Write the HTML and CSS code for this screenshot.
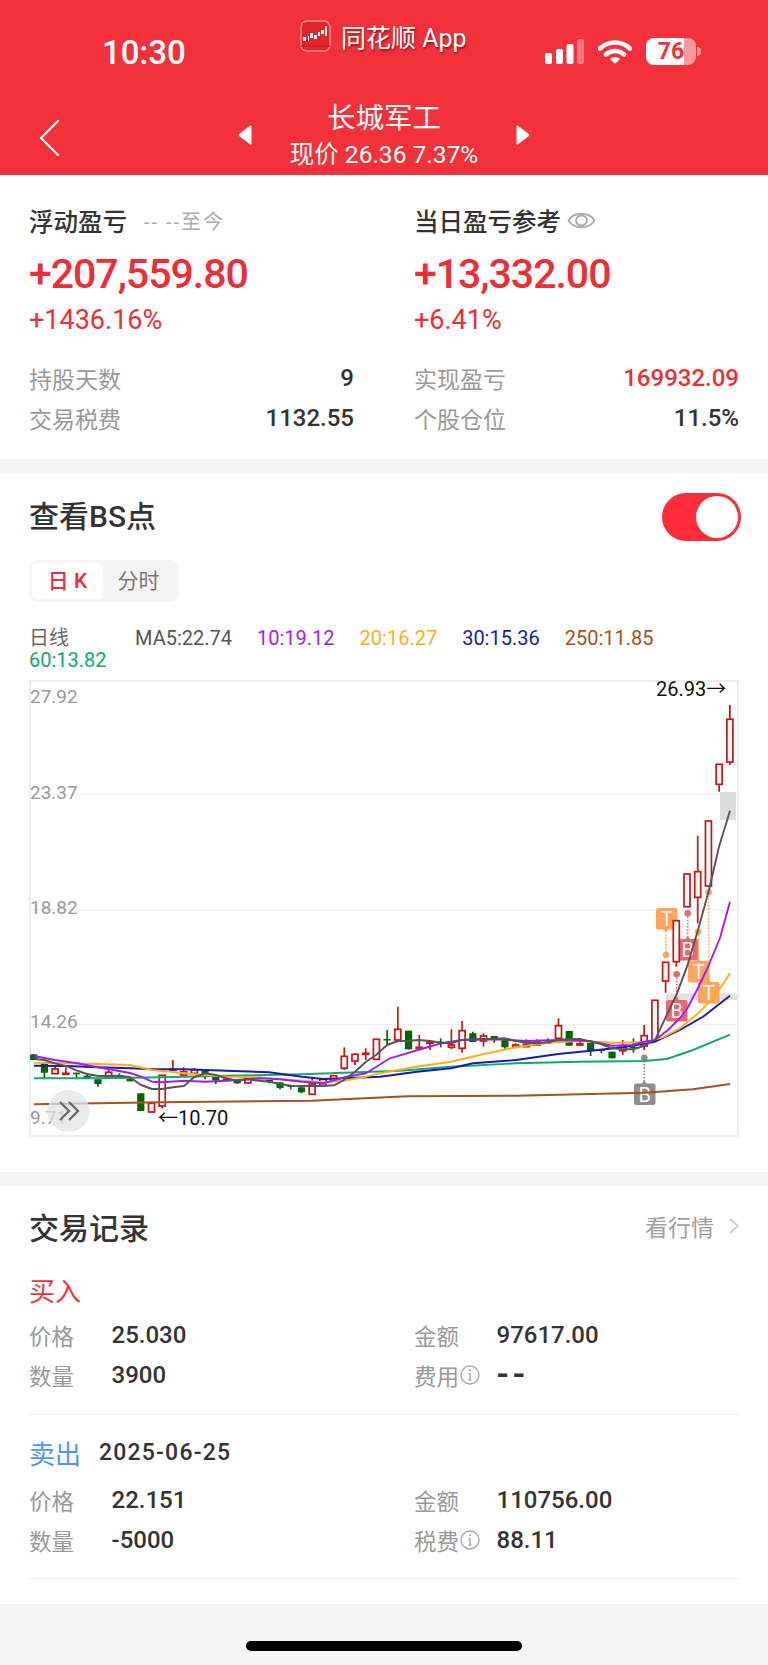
FILE: index.html
```html
<!DOCTYPE html>
<html lang="zh-CN">
<head>
  <meta charset="UTF-8" />
  <meta name="viewport" content="width=device-width, initial-scale=1.0"/>
  <title>长城军工</title>
  <link rel="stylesheet" href="styles.css">
</head>
<body>

  <header class="header">
    <div class="status">
      <div class="time">10:30</div>
      <div class="app">
        <svg class="app-logo" viewBox="0 0 31 32">
          <rect x="1" y="1" width="29" height="30" rx="6" fill="#e0252b" stroke="#f98a8f" stroke-width="1.5"/>
          <path d="M1 26h29" stroke="#c81f25" stroke-width="1.5"/>
          <path d="M3 17h3v4H3zM8 16h1v5H8zM10 13h3v5h-3zM14 15h3v4h-3zM18 12h2v4h-2zM21 10h3v4h-3zM25 6h2v10h-2z" fill="#fff"/>
        </svg>
        <span class="app-name">同花顺 App</span>
      </div>
      <svg class="signal" viewBox="0 0 39 25">
        <rect x="0" y="14" width="7" height="11" rx="2" fill="#fff"/>
        <rect x="11" y="10" width="7" height="15" rx="2" fill="#fff"/>
        <rect x="21.500" y="5" width="7" height="20" rx="2" fill="#fff"/>
        <rect x="32" y="0" width="7" height="25" rx="2" fill="#fff" opacity=".35"/>
      </svg>
      <svg class="wifi" viewBox="0 0 34 25">
        <path d="M2 9.500a22 22 0 0 1 30 0M8 15.500a13.500 13.500 0 0 1 18 0" fill="none" stroke="#fff" stroke-width="4.500" stroke-linecap="round"/>
        <path d="M12 20a7.500 7.500 0 0 1 10 0l-5 5z" fill="#fff"/>
      </svg>
      <div class="battery">76</div>
      <div class="battery-nub"></div>
    </div>
    <div class="nav">
      <svg class="back" viewBox="0 0 20 36">
        <path d="M19 1L2 18l17 17" fill="none" stroke="#fff" stroke-width="2.200" stroke-linecap="round" stroke-linejoin="round"/>
      </svg>
      <div class="stock">
        <svg class="arrow" viewBox="0 0 14 20"><path d="M12.500 1.500v17L1.500 10z" fill="#fff" stroke="#fff" stroke-width="2" stroke-linejoin="round"/></svg>
        <div class="stock-text">
          <div class="stock-name">长城军工</div>
          <div class="stock-price">现价 26.36 7.37%</div>
        </div>
        <svg class="arrow" viewBox="0 0 14 20"><path d="M1.500 1.500v17L12.500 10z" fill="#fff" stroke="#fff" stroke-width="2" stroke-linejoin="round"/></svg>
      </div>
    </div>
  </header>

  <section class="panel summary">
    <div class="summary-col">
      <div class="summary-title">浮动盈亏 <span class="since">-- --至今</span></div>
      <div class="big-value">+207,559.80</div>
      <div class="big-pct">+1436.16%</div>
      <div class="stat"><span>持股天数</span><b>9</b></div>
      <div class="stat"><span>交易税费</span><b>1132.55</b></div>
    </div>
    <div class="summary-col">
      <div class="summary-title">当日盈亏参考
        <svg class="eye" viewBox="0 0 29 19">
          <path d="M1.500 9.500C7 .5 22 .5 27.500 9.500 22 18.500 7 18.500 1.500 9.500z" fill="none" stroke="#aaa" stroke-width="1.800"/>
          <ellipse cx="14.500" cy="9.500" rx="5.500" ry="5" fill="none" stroke="#aaa" stroke-width="1.800"/>
        </svg>
      </div>
      <div class="big-value">+13,332.00</div>
      <div class="big-pct">+6.41%</div>
      <div class="stat"><span>实现盈亏</span><b class="red">169932.09</b></div>
      <div class="stat"><span>个股仓位</span><b>11.5%</b></div>
    </div>
  </section>

  <section class="panel bs">
    <div class="bs-head">
      <div class="section-title">查看BS点</div>
      <div class="toggle"><div class="knob"></div></div>
    </div>
    <div class="tabs">
      <div class="tab active">日 K</div>
      <div class="tab">分时</div>
    </div>
    <div class="legend">
      <span class="legend-name">日线</span>
      <span class="ma5">MA5:22.74</span>
      <span class="ma10">10:19.12</span>
      <span class="ma20">20:16.27</span>
      <span class="ma30">30:15.36</span>
      <span class="ma250">250:11.85</span>
      <span class="ma60">60:13.82</span>
    </div>

    <svg id="kline" class="kline" viewBox="29 680 711 458">
      <rect x="30" y="681" width="708" height="455" fill="#fff" stroke="#eee" stroke-width="2"/>
      <path d="M30 794.500h708M30 910h708M30 1024.500h708" stroke="#f1f1f1" stroke-width="1.500"/>
      <g class="axis">
        <text x="30" y="703">27.92</text>
        <text x="30" y="799">23.37</text>
        <text x="30" y="914">18.82</text>
        <text x="30" y="1028">14.26</text>
        <text x="30" y="1124">9.71</text>
      </g>
      <rect x="720" y="792" width="16" height="28" fill="#ddd"/>
      <rect x="666" y="993.500" width="71" height="6.500" fill="#e2e2e2"/>
      <path d="M730 765h7" stroke="#ddd" stroke-width="1"/>
      <g id="plot"></g>
      <text class="extreme" x="656" y="696">26.93→</text>
      <text class="extreme" x="158" y="1125">←10.70</text>
      <circle cx="68.500" cy="1111" r="21" fill="#e4e4e4" fill-opacity=".75"/>
      <path d="M60 1102l9 9-9 9M69 1102l9 9-9 9" fill="none" stroke="#666" stroke-width="2.200"/>
    </svg>
  </section>

  <section class="panel trades">
    <div class="trades-head">
      <div class="section-title">交易记录</div>
      <div class="more">看行情
        <svg class="more-arrow" viewBox="0 0 10 16"><path d="M1 1l8 7-8 7" fill="none" stroke="#ccc" stroke-width="1.800"/></svg>
      </div>
    </div>

    <div class="trade">
      <div class="trade-side"><span class="buy">买入</span></div>
      <div class="trade-grid">
        <div class="cell"><span class="label">价格</span><b>25.030</b></div>
        <div class="cell"><span class="label">金额</span><b>97617.00</b></div>
        <div class="cell"><span class="label">数量</span><b>3900</b></div>
        <div class="cell"><span class="label">费用<svg class="info" viewBox="0 0 20 20"><circle cx="10" cy="10" r="9" fill="none" stroke="#aaa" stroke-width="1.400"/><path d="M10 8.500v6.500M8.500 15h3M8.500 8.500H10" fill="none" stroke="#aaa" stroke-width="1.500"/><circle cx="10" cy="5.300" r="1.100" fill="#aaa"/></svg></span><b class="dash">--</b></div>
      </div>
    </div>

    <div class="trade">
      <div class="trade-side"><span class="sell">卖出</span><span class="trade-date">2025-06-25</span></div>
      <div class="trade-grid">
        <div class="cell"><span class="label">价格</span><b>22.151</b></div>
        <div class="cell"><span class="label">金额</span><b>110756.00</b></div>
        <div class="cell"><span class="label">数量</span><b>-5000</b></div>
        <div class="cell"><span class="label">税费<svg class="info" viewBox="0 0 20 20"><circle cx="10" cy="10" r="9" fill="none" stroke="#aaa" stroke-width="1.400"/><path d="M10 8.500v6.500M8.500 15h3M8.500 8.500H10" fill="none" stroke="#aaa" stroke-width="1.500"/><circle cx="10" cy="5.300" r="1.100" fill="#aaa"/></svg></span><b>88.11</b></div>
      </div>
    </div>
  </section>

  <footer class="footer"><div class="home-bar"></div></footer>

  <script src="chart.js"></script>
</body>
</html>
```

FILE: styles.css
```css
* {
  box-sizing: border-box;
}
body {
  margin: 0;
  background-color: #f5f5f5;
  color: #333;
  font-family: Roboto, "Noto Sans CJK SC", sans-serif;
}
b {
  font-weight: 500;
}

/* red top bar */
.header {
  height: 175px;
  background-color: #f3313b;
  color: #fff;
}
.status {
  display: flex;
  align-items: center;
  height: 100px;
  padding-left: 102px;
}
.time {
  width: 198px;
  padding-top: 4px;
  font-size: 33px;
  font-weight: 500;
}
.app {
  display: flex;
  align-items: center;
  gap: 10px;
  width: 245px;
  margin-top: -28px;
}
.app-logo {
  width: 31px;
  height: 32px;
}
.app-name {
  font-size: 25px;
  text-shadow: 1px 2px 2px rgba(90, 0, 0, .55);
}
.signal {
  width: 39px;
  height: 25px;
  margin-top: 3px;
}
.wifi {
  width: 34px;
  height: 25px;
  margin: 3px 14px 0;
}
.battery {
  width: 50px;
  height: 27px;
  margin-top: 3px;
  border-radius: 8px;
  background: linear-gradient(90deg, #fff 76%, rgba(255, 255, 255, .5) 76%);
  color: #f3313b;
  font-size: 23px;
  font-weight: 700;
  line-height: 27px;
  text-align: center;
}
.battery-nub {
  width: 4px;
  height: 9px;
  margin: 3px 0 0 1px;
  border-radius: 0 4px 4px 0;
  background-color: rgba(255, 255, 255, .5);
}
.nav {
  display: grid;
  grid-template-columns: 238px 292px;
  align-items: center;
  height: 75px;
}
.back {
  width: 20px;
  height: 36px;
  margin: 0 0 0 39px;
}
.stock {
  display: flex;
  justify-content: space-between;
  align-items: center;
  margin-top: -3px;
}
.arrow {
  width: 14px;
  height: 20px;
  margin-top: -2px;
}
.stock-text {
  text-align: center;
}
.stock-name {
  font-size: 28.500px;
  line-height: 36px;
}
.stock-price {
  margin-top: 2px;
  font-size: 24.500px;
  line-height: 32px;
}

/* white blocks */
.panel {
  padding: 0 29px;
  background-color: #fff;
}
.red {
  color: #ee2d36;
}

.summary {
  display: grid;
  grid-template-columns: 325px 325px;
  column-gap: 60px;
  height: 284px;
  margin-bottom: 14px;
  padding-top: 28px;
}
.summary-title {
  display: flex;
  align-items: center;
  height: 34px;
  font-size: 24.500px;
  font-weight: 500;
}
.since {
  margin-left: 17px;
  color: #aaa;
  font-size: 20px;
  font-weight: 400;
  letter-spacing: 2px;
}
.eye {
  width: 29px;
  height: 19px;
  margin-left: 6px;
}
.big-value {
  margin-top: 14px;
  color: #ee2d36;
  font-size: 41px;
  font-weight: 500;
  letter-spacing: -1px;
  line-height: 46px;
}
.big-pct {
  margin-top: 5px;
  color: #ee2d36;
  font-size: 27px;
  line-height: 36px;
}
.stat {
  display: flex;
  justify-content: space-between;
  align-items: center;
  height: 40px;
  font-size: 24px;
}
.big-pct + .stat {
  margin-top: 20px;
}
.stat span {
  color: #999;
  font-size: 23px;
}

.bs {
  height: 699px;
  margin-bottom: 14px;
  padding-top: 20px;
}
.bs-head,
.trades-head {
  display: flex;
  justify-content: space-between;
  align-items: center;
}
.section-title {
  font-size: 30px;
  font-weight: 500;
}
.bs .section-title {
  margin-top: -6px;
}
.toggle {
  display: flex;
  justify-content: flex-end;
  align-items: center;
  width: 79px;
  height: 48px;
  margin-right: -2px;
  padding-right: 3px;
  border-radius: 24px;
  background-color: #ff2d3b;
}
.knob {
  width: 42px;
  height: 42px;
  border-radius: 50%;
  background-color: #fff;
}
.tabs {
  display: inline-flex;
  width: 150px;
  height: 42px;
  margin-top: 19px;
  padding: 3px;
  border-radius: 8px;
  background-color: #f5f5f5;
}
.tab {
  width: 71px;
  border-radius: 6px;
  color: #777;
  font-size: 21px;
  line-height: 36px;
  text-align: center;
}
.tab.active {
  background-color: #fff;
  color: #ee2d36;
  font-weight: 500;
}
.legend {
  display: flex;
  flex-wrap: wrap;
  column-gap: 25px;
  margin-top: 25px;
  font-size: 20px;
  line-height: 22px;
}
.legend-name {
  width: 81px;
  color: #666;
}
.ma5 { color: #555; }
.ma10 { color: #a01cff; }
.ma20 { color: #ffae1a; }
.ma30 { color: #1a1aa8; }
.ma250 { color: #a84f1f; }
.ma60 { color: #12a870; }

.kline {
  display: block;
  width: 711px;
  height: 458px;
  margin: 9px 0 0;
}
.axis text {
  fill: #999;
  font-size: 19px;
}
.extreme {
  fill: #111;
  font-size: 20px;
}
.tag-text {
  fill: #fff;
  font-size: 20px;
  text-anchor: middle;
}

.trades {
  height: 418px;
  padding-top: 18px;
}
.more {
  display: flex;
  align-items: center;
  gap: 15px;
  color: #a0a0a0;
  font-size: 23px;
}
.more-arrow {
  width: 10px;
  height: 16px;
}
.trade {
  border-bottom: 1px solid #f1f1f1;
}
.trade-side {
  display: flex;
  align-items: center;
  gap: 18px;
  height: 34px;
  margin-top: 24px;
  font-size: 26px;
}
.trade + .trade .trade-side {
  margin-top: 20px;
}
.buy {
  color: #f3313b;
}
.sell {
  color: #4a98f5;
}
.trade-date {
  font-size: 23px;
  font-weight: 500;
  letter-spacing: 1.200px;
}
.trade-grid {
  display: grid;
  grid-template-columns: 385px 1fr;
  padding: 9px 0 19px;
}
.trade + .trade .trade-grid {
  padding: 11px 0 18px;
}
.cell {
  display: flex;
  align-items: center;
  height: 40px;
  font-size: 24px;
}
.label {
  display: flex;
  align-items: center;
  width: 82.500px;
  color: #999;
  font-size: 22.500px;
}
.dash {
  font-size: 36px;
  letter-spacing: 4px;
}
.info {
  width: 20px;
  height: 20px;
  margin-left: 1px;
}

.footer {
  display: flex;
  justify-content: center;
  padding-top: 37px;
}
.home-bar {
  width: 276px;
  height: 10px;
  border-radius: 5px;
  background-color: #000;
}
```

FILE: chart.js
```js
const plot = document.getElementById('plot');
const SVG_NS = 'http://www.w3.org/2000/svg';

function add(tag, attrs, text) {
  const el = document.createElementNS(SVG_NS, tag);
  for (const key in attrs) el.setAttribute(key, attrs[key]);
  if (text) el.textContent = text;
  plot.appendChild(el);
  return el;
}

// trade markers: letter, box left, box top, dot x, dot y, colour
const marks = [
  ['T', 656, 908, 666, 955, '#ffa45c'],
  ['B', 677, 939, 687.7, 913.3, '#ef6670'],
  ['T', 688, 961, 698.3, 931.7, '#ffa45c'],
  ['T', 698, 982, 708.7, 892.3, '#ffa45c'],
  ['B', 666, 1000, 676.7, 974.3, '#ef6670'],
  ['B', 634, 1083.500, 644.3, 1057.7, '#8e8e8e']
];

marks.forEach(([letter, x, y, dotX, dotY, color]) => {
  const midY = y + 10.5;
  add('line', { x1: dotX, y1: dotY, x2: dotX, y2: midY, stroke: color, 'stroke-width': 1.6, 'stroke-dasharray': '1.6 1.6' });
  add('circle', { cx: dotX, cy: dotY, r: 3.3, fill: color });
  add('rect', { x: x, y: y, width: 21.5, height: 21.5, rx: 2, fill: color });
  const tipY = dotY < y ? y - 3 : y + 24.5;
  const baseY = dotY < y ? y + 1 : y + 20.5;
  add('path', { d: `M${dotX - 3} ${baseY}L${dotX} ${tipY}L${dotX + 3} ${baseY}z`, fill: color });
  add('text', { x: x + 10.75, y: y + 18, class: 'tag-text' }, letter);
});

// candles in order: high, body top, body bottom, low, r = hollow red, g = solid green
const candles = [
  [1054, 1054.3, 1060, 1060, 'g'], [1062, 1062.3, 1072.7, 1078, 'g'], [1067, 1069, 1073.7, 1074, 'r'],
  [1067.3, 1073.3, 1074.3, 1074.3, 'r'], [1072.7, 1072.7, 1073.7, 1078, 'g'], [1073, 1075.7, 1078.3, 1078.3, 'g'],
  [1079, 1079.3, 1084, 1086.7, 'g'], [1069, 1072.3, 1077.7, 1078, 'r'], [1073.3, 1075, 1078, 1078, 'g'],
  [1076.7, 1079, 1081.3, 1081.3, 'g'], [1093.3, 1093.3, 1111, 1111, 'g'], [1101.7, 1103.3, 1112, 1112, 'r'],
  [1075.3, 1075.3, 1106, 1108.3, 'r'], [1060, 1069.3, 1070.3, 1070.3, 'r'], [1067.3, 1071.7, 1075, 1075, 'r'],
  [1068.3, 1069.7, 1073.3, 1073.3, 'r'], [1071, 1071, 1075, 1079.3, 'g'], [1076.3, 1076.3, 1080.3, 1084, 'g'],
  [1075, 1079.3, 1080.3, 1080.3, 'r'], [1080.3, 1080.3, 1083.3, 1084, 'g'], [1078.3, 1078.3, 1083, 1083, 'r'],
  [1077.5, 1077.7, 1078.5, 1078.5, 'g'], [1080, 1080, 1081, 1083.3, 'g'], [1082.3, 1082.3, 1088, 1089.3, 'g'],
  [1085.3, 1085.3, 1086.7, 1089.3, 'g'], [1087.3, 1087.3, 1092.3, 1093.3, 'g'], [1077.3, 1084, 1094.3, 1094.3, 'r'],
  [1079.3, 1079.3, 1085.3, 1085.3, 'r'], [1075.7, 1075.7, 1080.7, 1080.7, 'r'], [1047.3, 1056.3, 1068.3, 1070, 'r'],
  [1053.3, 1054.3, 1061, 1065, 'r'], [1048.3, 1053.3, 1054.3, 1060, 'r'], [1039.3, 1039.3, 1059.3, 1059.3, 'r'],
  [1030, 1039, 1040, 1045, 'g'], [1006.7, 1029.3, 1040, 1040, 'r'], [1030.7, 1030.7, 1049.3, 1049.3, 'g'],
  [1035, 1047.3, 1048.3, 1048.3, 'r'], [1041.7, 1042.3, 1043.3, 1050, 'r'], [1038.3, 1041.7, 1042.7, 1047.3, 'g'],
  [1029.3, 1045, 1047.3, 1049.3, 'r'], [1021, 1030.7, 1048.3, 1052.7, 'r'], [1031.7, 1033.3, 1042, 1042, 'g'],
  [1033.3, 1036, 1041, 1046.7, 'r'], [1036, 1036, 1040, 1042.7, 'g'], [1038, 1040, 1047.3, 1048.7, 'g'],
  [1043.3, 1045, 1047.3, 1047.3, 'r'], [1039.3, 1044.3, 1046.7, 1046.7, 'r'], [1039.3, 1042, 1045, 1045, 'r'],
  [1038.3, 1041.7, 1044, 1044, 'g'], [1018.3, 1025.7, 1038.3, 1043.3, 'r'], [1031, 1031, 1045.7, 1045.7, 'g'],
  [1038.3, 1044, 1045, 1045, 'r'], [1042.7, 1042.7, 1050.7, 1056, 'g'], [1049.3, 1049.3, 1050.7, 1053.3, 'g'],
  [1051.7, 1051.7, 1058.3, 1058.3, 'g'], [1040, 1045.7, 1050.7, 1055, 'r'], [1038.3, 1046.7, 1048.3, 1052.7, 'g'],
  [1025, 1035.7, 1046, 1050, 'r'], [1000.3, 1000.3, 1040, 1040, 'r'], [962.3, 962.3, 981, 992.7, 'r'],
  [920.7, 920.7, 961.7, 966.7, 'r'], [874, 874, 906.7, 906.7, 'r'], [835.7, 871.7, 897.3, 923.3, 'r'],
  [821, 821, 886, 886, 'r'], [764.3, 764.3, 784.3, 791.7, 'r'], [705, 719.3, 762, 765, 'r']
];

candles.forEach(([high, top, bottom, low, kind], i) => {
  const x = 33.7 + i * 10.71;
  const color = kind === 'g' ? '#006600' : '#cc1111';
  add('line', { x1: x, y1: high, x2: x, y2: low, stroke: color, 'stroke-width': 1.7 });
  if (kind === 'g') {
    add('rect', { x: x - 3.6, y: top, width: 7.2, height: Math.max(bottom - top, 1.5), fill: color });
  } else {
    add('rect', { x: x - 3, y: top, width: 6, height: Math.max(bottom - top, 0.8), fill: '#fff', stroke: color, 'stroke-width': 1.7 });
  }
});

// moving averages, points read off the chart
const lines = [
  ['#a84f1f', [[34, 1104.3], [162, 1102.3], [312, 1100.7], [407, 1096.3], [516, 1095.7], [645, 1092.7], [693, 1089.3], [730, 1084]]],
  ['#12a870', [[34, 1078.3], [98, 1078.3], [162, 1077.3], [227, 1075.7], [302, 1074.3], [400, 1070.7], [451, 1066.7], [516, 1063.3], [580, 1061.7], [644, 1061], [667, 1059], [693, 1050], [730, 1034.7]]],
  ['#1a1aa8', [[34, 1065.7], [66, 1066], [98, 1067.3], [130, 1068.3], [152, 1069.3], [184, 1069.3], [227, 1070.7], [269, 1072.3], [302, 1076.7], [323, 1079], [344, 1078.3], [380, 1076.7], [417, 1071.7], [451, 1068.3], [473, 1063.3], [516, 1060], [558, 1054], [591, 1050.7], [623, 1047.3], [655, 1041.7], [680, 1030], [703, 1016.7], [730, 995.7]]],
  ['#ffae1a', [[34, 1062.7], [66, 1063.3], [98, 1064], [130, 1065], [152, 1070], [184, 1073.3], [205, 1075], [227, 1076.7], [259, 1077.3], [280, 1079.3], [302, 1080.7], [323, 1082.3], [344, 1080.7], [366, 1076.7], [380, 1073.3], [413, 1067.3], [451, 1061.7], [483, 1054.3], [516, 1047.3], [548, 1042.7], [580, 1041], [612, 1042.7], [644, 1042.3], [663, 1037.3], [680, 1028.3], [700, 1011.7], [717, 993.3], [730, 973.3]]],
  ['#a01cff', [[34, 1056], [55, 1060], [77, 1063.3], [98, 1067.3], [119, 1071], [130, 1073], [141, 1076.7], [152, 1081.7], [162, 1082.3], [184, 1080.7], [205, 1081.7], [227, 1080.7], [259, 1078.3], [280, 1079.3], [302, 1081.7], [323, 1083.3], [344, 1077.3], [366, 1073.3], [390, 1058.3], [418, 1050], [441, 1043.3], [462, 1040], [494, 1039.3], [526, 1041], [558, 1040], [590, 1041], [612, 1045.7], [633, 1045], [644, 1041.7], [655, 1040], [668, 1030], [680, 1018], [687, 1009], [697, 990], [708, 967], [720, 938], [730, 901.7]]],
  ['#555555', [[35, 1059], [44.3, 1060], [55, 1063.3], [66, 1066], [77, 1070.7], [87, 1074], [98, 1076], [109, 1076], [119, 1075.7], [130, 1077.3], [141, 1085], [152, 1089], [162, 1089], [173, 1087.3], [184, 1086], [194, 1077.3], [205, 1073.3], [216, 1075], [227, 1078.3], [237, 1080.7], [248, 1079.3], [259, 1080.7], [269, 1081.7], [280, 1084], [291, 1085.7], [302, 1086], [312, 1086], [323, 1086], [334, 1085.3], [344, 1080], [355, 1071.7], [366, 1061.7], [376, 1055], [387, 1045], [398, 1041], [409, 1040.7], [419, 1040], [430, 1041], [441, 1042.7], [451, 1043.3], [462, 1040], [473, 1039.3], [483, 1039], [494, 1039], [505, 1038.3], [516, 1041], [526, 1042.7], [537, 1043.3], [548, 1042.3], [558, 1040], [569, 1039], [580, 1039], [591, 1041.7], [601, 1044], [612, 1048.3], [623, 1049.3], [633, 1049.3], [644, 1046], [655, 1040], [666, 1016.7], [677, 993.3], [687, 966.7], [698, 930], [709, 890], [719, 846.7], [730, 810.7]]]
];

lines.forEach(([color, points]) => {
  add('polyline', {
    points: points.map(p => p.join(',')).join(' '),
    fill: 'none',
    stroke: color,
    'stroke-width': 1.9,
    'stroke-linejoin': 'round'
  });
});
```
